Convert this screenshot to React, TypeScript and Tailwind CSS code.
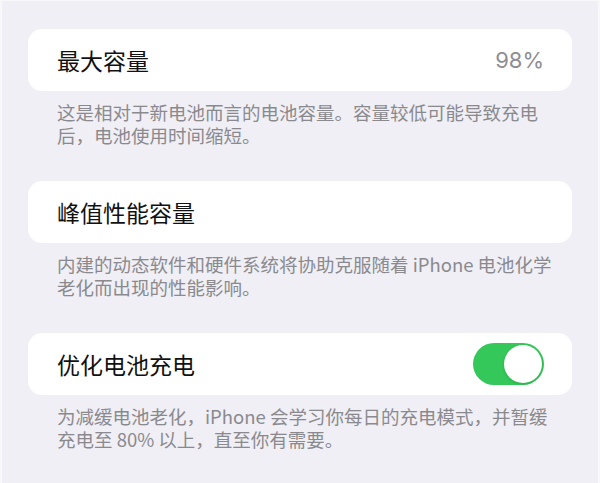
import React from "react";

const cjk = "font-['Noto_Sans_CJK_SC','Noto_Sans',sans-serif]";

function Card({ children }: { children: React.ReactNode }) {
  return (
    <div className="flex h-[62px] items-center justify-between rounded-[14px] bg-white pl-[29px] pr-[28px]">
      {children}
    </div>
  );
}

function Note({ children }: { children: React.ReactNode }) {
  return (
    <p className="mt-[10px] pl-[29px] text-[18.5px] leading-[23px] text-[#8a8a8e]">
      {children}
    </p>
  );
}

function Toggle() {
  return (
    <div className="flex h-[42px] w-[71px] items-center justify-end rounded-full bg-[#34c759] px-[2px]">
      <div className="h-[38px] w-[38px] rounded-full bg-white shadow-[0_1px_3px_rgba(0,0,0,0.15)]" />
    </div>
  );
}

export default function App() {
  return (
    <main
      className={`h-[483px] w-[600px] overflow-hidden border-x-2 border-t border-[#f8f8fb] bg-[#f0eff5] px-[26px] pt-[28px] ${cjk}`}
    >
      <section>
        <Card>
          <span className="text-[23px] text-[#111]">最大容量</span>
          <span className="font-['Inter',sans-serif] text-[22px] text-[#8e8e93]">
            98%
          </span>
        </Card>
        <Note>
          这是相对于新电池而言的电池容量。容量较低可能导致充电
          <br />
          后，电池使用时间缩短。
        </Note>
      </section>

      <section className="mt-[34px]">
        <Card>
          <span className="text-[23px] text-[#111]">峰值性能容量</span>
        </Card>
        <Note>
          内建的动态软件和硬件系统将协助克服随着 iPhone 电池化学
          <br />
          老化而出现的性能影响。
        </Note>
      </section>

      <section className="mt-[34px]">
        <Card>
          <span className="text-[23px] text-[#111]">优化电池充电</span>
          <Toggle />
        </Card>
        <Note>
          为减缓电池老化，iPhone 会学习你每日的充电模式，并暂缓
          <br />
          充电至 80% 以上，直至你有需要。
        </Note>
      </section>
    </main>
  );
}
